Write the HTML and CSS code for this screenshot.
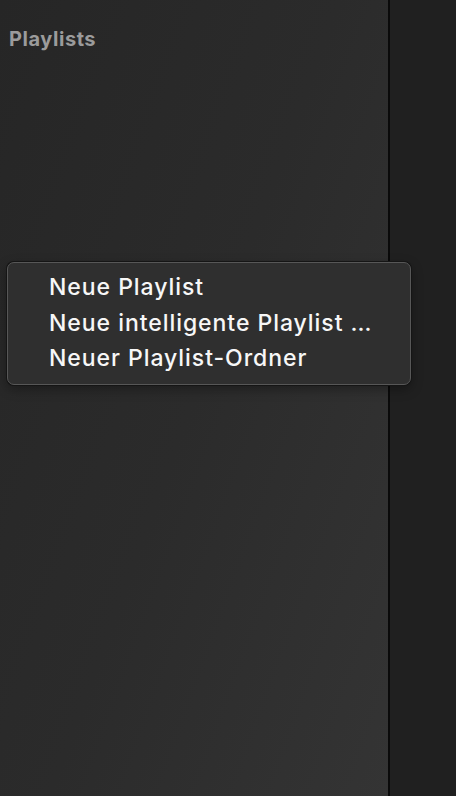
FILE: index.html
```html
<!DOCTYPE html>
<html lang="de">
<head>
<meta charset="utf-8">
<link rel="stylesheet" href="styles.css">
</head>
<body>
<div class="app">
  <aside class="sidebar">
    <div class="section-title">Playlists</div>
  </aside>
  <div class="divider"></div>
  <main class="content"></main>
</div>
<div class="menu">
  <div class="menu-item">Neue Playlist</div>
  <div class="menu-item">Neue intelligente Playlist …</div>
  <div class="menu-item">Neuer Playlist-Ordner</div>
</div>
</body>
</html>
```
FILE: styles.css
```css
html, body {
  margin: 0;
  padding: 0;
  width: 456px;
  height: 796px;
  overflow: hidden;
  background: #202020;
  font-family: Inter, "Liberation Sans", sans-serif;
}
.app {
  display: flex;
  height: 796px;
}
.sidebar {
  width: 388px;
  flex: none;
  background: linear-gradient(110deg, #262626 0%, #2b2b2b 50%, #343434 100%);
  padding: 27px 0 0 9px;
  box-sizing: border-box;
}
.section-title {
  color: #9b9b9b;
  font-weight: 700;
  font-size: 20px;
  letter-spacing: 0.55px;
  line-height: 24px;
}
.divider {
  width: 2px;
  flex: none;
  background: #0a0a0a;
}
.content {
  flex: 1;
  background: #202020;
}
.menu {
  position: absolute;
  left: 7px;
  top: 262px;
  width: 404px;
  height: 123px;
  box-sizing: border-box;
  border-radius: 7px;
  background: #2f2f2f;
  border: 1px solid #575757;
  box-shadow: 0 0 0 1px #151515, 0 4px 12px rgba(0,0,0,0.35);
  padding: 7px 0 0 41px;
}
.menu-item {
  color: #f7f7f7;
  font-size: 23px;
  font-weight: 500;
  letter-spacing: 0.95px;
  line-height: 35.5px;
  white-space: nowrap;
}
```
